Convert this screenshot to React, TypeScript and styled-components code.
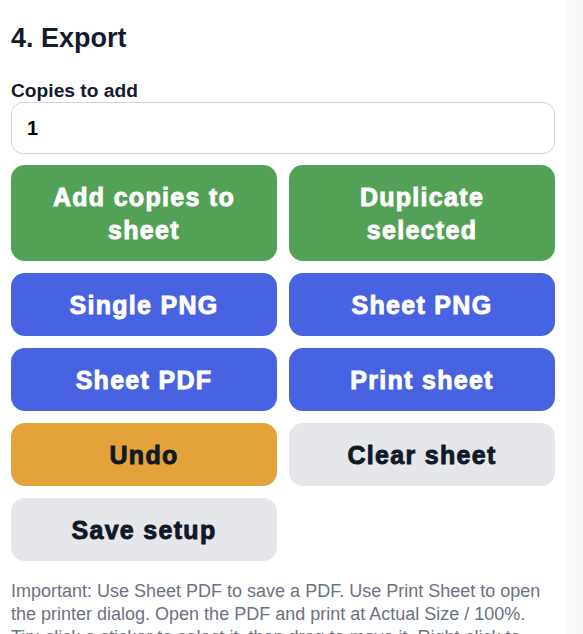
import React from "react";
import styled, { createGlobalStyle, css } from "styled-components";

const Global = createGlobalStyle`
  html, body { margin: 0; padding: 0; background: #f9fafb; }
  body { font-family: "Liberation Sans", Arial, sans-serif; }
  * { box-sizing: border-box; }
`;

const Page = styled.div`
  display: flex;
  height: 634px;
  overflow: hidden;
`;

const Panel = styled.section`
  width: 566px;
  flex-shrink: 0;
  background: #ffffff;
  padding: 23px 11px 0 11px;
  height: 634px;
  overflow: hidden;
`;

const Heading = styled.h2`
  margin: 0;
  font-size: 27px;
  line-height: 31px;
  font-weight: 700;
  color: #161a2e;
`;

const Field = styled.label`
  display: flex;
  flex-direction: column;
  margin-top: 25px;
`;

const FieldLabel = styled.span`
  font-size: 19.2px;
  line-height: 23px;
  font-weight: 700;
  color: #161a2e;
`;

const NumberInput = styled.input`
  width: 544px;
  height: 52px;
  border: 1px solid #d1d5e0;
  border-radius: 12px;
  padding: 0 15px;
  font-family: inherit;
  font-size: 20px;
  font-weight: 700;
  color: #000;
  background: #fff;
  outline: none;
`;

const ButtonGrid = styled.div`
  display: grid;
  grid-template-columns: 1fr 1fr;
  gap: 12px;
  margin-top: 11px;
`;

type Tone = "green" | "blue" | "orange" | "grey";

const tones: Record<Tone, ReturnType<typeof css>> = {
  green: css`background: #53a156; color: #ffffff;`,
  blue: css`background: #4763e1; color: #ffffff;`,
  orange: css`background: #e3a23a; color: #111827;`,
  grey: css`background: #e5e7eb; color: #111827;`,
};

const ActionButton = styled.button<{ $tone: Tone }>`
  border: none;
  border-radius: 14px;
  padding: 16px 26px 14px;
  font-family: "Liberation Sans", Arial, sans-serif;
  font-size: 25px;
  line-height: 33px;
  font-weight: 800;
  letter-spacing: 1.3px;
  text-align: center;
  cursor: pointer;
  -webkit-text-stroke: 0.9px currentColor;
  ${(p) => tones[p.$tone]}
`;

const Note = styled.p`
  margin: 19px 0 0 0;
  font-size: 18px;
  line-height: 23px;
  color: #6b7280;
`;

const Side = styled.div`
  flex: 1;
  background: linear-gradient(to right, #fbfbfc, #f6f7f8);
`;

const buttons: { label: string; tone: Tone }[] = [
  { label: "Add copies to sheet", tone: "green" },
  { label: "Duplicate selected", tone: "green" },
  { label: "Single PNG", tone: "blue" },
  { label: "Sheet PNG", tone: "blue" },
  { label: "Sheet PDF", tone: "blue" },
  { label: "Print sheet", tone: "blue" },
  { label: "Undo", tone: "orange" },
  { label: "Clear sheet", tone: "grey" },
  { label: "Save setup", tone: "grey" },
];

export default function App() {
  return (
    <Page>
      <Global />
      <Panel>
        <Heading>4. Export</Heading>
        <Field>
          <FieldLabel>Copies to add</FieldLabel>
          <NumberInput type="number" defaultValue={1} min={1} />
        </Field>
        <ButtonGrid>
          {buttons.map((b) => (
            <ActionButton key={b.label} $tone={b.tone}>
              {b.label}
            </ActionButton>
          ))}
        </ButtonGrid>
        <Note>
          Important: Use Sheet PDF to save a PDF. Use Print Sheet to open the
          printer dialog. Open the PDF and print at Actual Size / 100%. Tip:
          click a sticker to select it, then drag to move it. Right-click to
          delete.
        </Note>
      </Panel>
      <Side />
    </Page>
  );
}
